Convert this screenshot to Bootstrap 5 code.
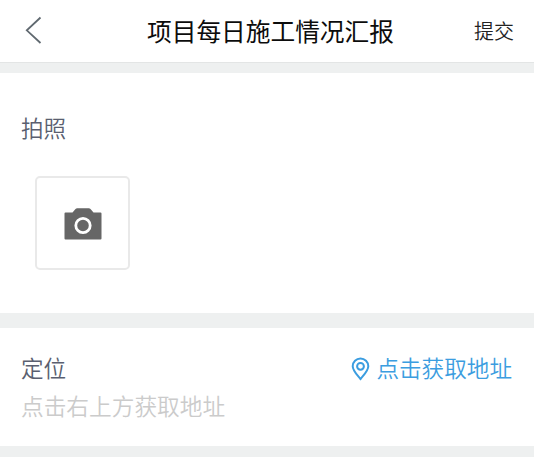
<!DOCTYPE html>
<html lang="zh-CN">
<head>
<meta charset="utf-8">
<meta name="viewport" content="width=device-width, initial-scale=1">
<title>项目每日施工情况汇报</title>
<link rel="stylesheet" href="https://cdn.jsdelivr.net/npm/bootstrap@5.3.0/dist/css/bootstrap.min.css">
<style>
body { background: #eef0f0; font-family: "Noto Sans CJK SC", sans-serif; font-size: 22.6px; line-height: 34px; font-weight: 350; color: #5a5f70; }
.topbar { height: 63px; border-bottom: 1px solid #e3e5e5; padding: 0 20px 2px 24px; }
.topbar h1 { font-size: 24.7px; line-height: 36px; font-weight: 400; color: #0c0c0c; padding-left: 3px; }
.side { width: 80px; }
.submit { font-size: 20px; font-weight: 350; color: #222; padding-top: 1px; }
.photo { height: 240px; margin-top: 10px; padding: 38px 21px 0; }
.upload { width: 95px; height: 94px; margin: 31px 0 0 14px; border: 2px solid #e9e9e9; border-radius: 5px; }
.upload svg { margin-top: 1px; }
.place { height: 118px; margin-top: 15px; padding: 23px 22px 0 21px; }
.locate { color: #3b9de0; gap: 6px; }
.locate svg { margin-top: 2px; }
.hint { color: #cbcbcb; margin-top: 4px; font-size: 22.7px; }
</style>
<script src="https://cdn.jsdelivr.net/npm/bootstrap@5.3.0/dist/js/bootstrap.bundle.min.js"></script>
</head>
<body>
<header class="topbar bg-white d-flex align-items-center justify-content-between">
  <a class="side d-flex" href="#" aria-label="返回">
    <svg width="20" height="30" viewBox="0 0 20 30" fill="none" stroke="#606970" stroke-width="1.8"><path d="M16.5 2.5 2.8 15.3 16.5 28"/></svg>
  </a>
  <h1 class="m-0 text-nowrap">项目每日施工情况汇报</h1>
  <a class="side submit text-end text-decoration-none" href="#">提交</a>
</header>
<main>
  <section class="photo bg-white">
    <div>拍照</div>
    <button class="upload bg-white p-0 d-flex align-items-center justify-content-center" type="button" aria-label="拍照">
      <svg width="38" height="32" viewBox="0 0 38 32"><path fill="#666" d="M1.5 4.5H8.5L11.5 1Q12.2.3 13.2.3H24.8Q25.8.3 26.5 1L29.5 4.5H36.5Q37.5 4.5 37.5 5.5V30.5Q37.5 31.5 36.5 31.5H1.5Q.5 31.5.5 30.5V5.5Q.5 4.5 1.5 4.5Z"/><circle cx="19" cy="17.5" r="7.2" fill="none" stroke="#fff" stroke-width="2.8"/></svg>
    </button>
  </section>
  <section class="place bg-white">
    <div class="d-flex justify-content-between">
      <span>定位</span>
      <a class="locate d-flex align-items-center text-decoration-none" href="#">
        <svg width="19" height="24" viewBox="0 0 19 24" fill="none" stroke="#3b9de0" stroke-width="2"><path d="M9.5 22C6.5 18.3 1.7 13.7 1.7 9.2A7.8 7.8 0 0 1 17.3 9.2C17.3 13.7 12.5 18.3 9.5 22Z"/><circle cx="9.5" cy="9.3" r="3.4"/></svg>
        <span>点击获取地址</span>
      </a>
    </div>
    <div class="hint">点击右上方获取地址</div>
  </section>
</main>
</body>
</html>
